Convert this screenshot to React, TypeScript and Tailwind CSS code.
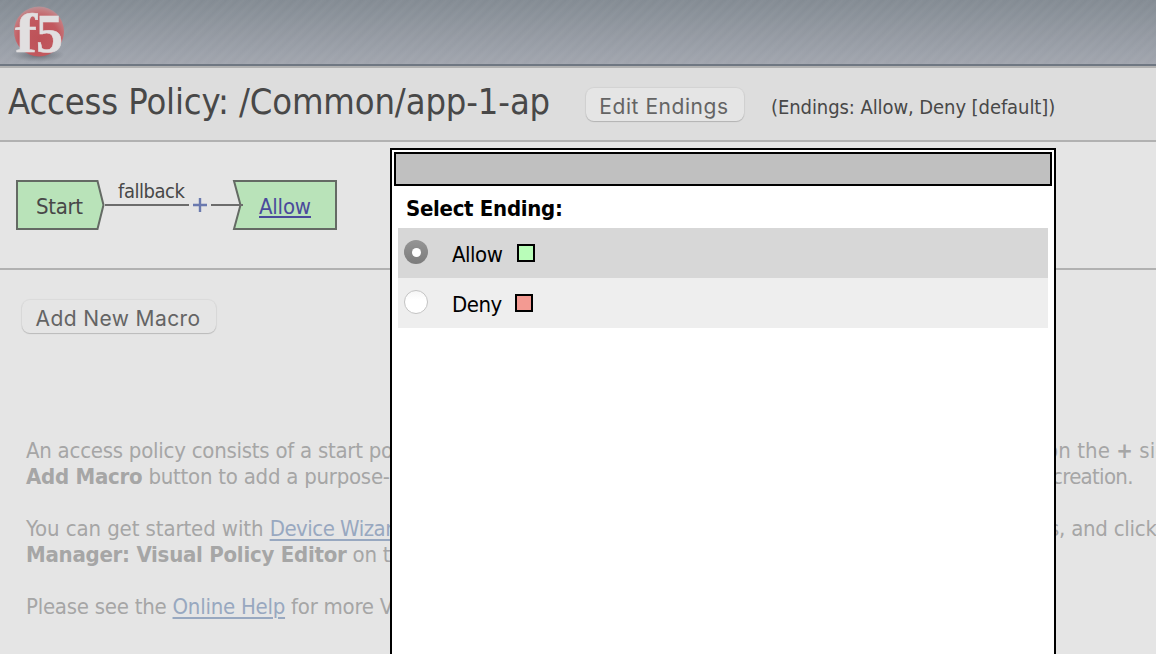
import React from "react";

const tahoma = "font-['DejaVu_Sans_Condensed','DejaVu_Sans',sans-serif] [font-stretch:condensed]";

function Logo() {
  return (
    <svg width="60" height="60" viewBox="0 0 60 60">
      <defs>
        <radialGradient id="ball" cx="0.5" cy="0.64" r="0.66">
          <stop offset="0" stopColor="#bd5258" />
          <stop offset="0.6" stopColor="#c2595f" />
          <stop offset="0.85" stopColor="#c67c80" />
          <stop offset="1" stopColor="#b3999f" />
        </radialGradient>
        <radialGradient id="shade">
          <stop offset="0" stopColor="#555b63" stopOpacity="0.8" />
          <stop offset="1" stopColor="#6b7078" stopOpacity="0" />
        </radialGradient>
      </defs>
      <ellipse cx="31" cy="49" rx="27" ry="7" fill="url(#shade)" />
      <circle cx="32" cy="25.500" r="25" fill="url(#ball)" />
      <g fontFamily="Liberation Serif, serif" fontWeight="700" fontSize="54" fill="#e1dfe0" stroke="#e1dfe0" strokeWidth="0.500">
        <text x="8" y="45.500" textLength="22" lengthAdjust="spacingAndGlyphs">f</text>
        <text x="29" y="45.500" textLength="27" lengthAdjust="spacingAndGlyphs">5</text>
      </g>
    </svg>
  );
}

function MacButton({ children, className }: { children: React.ReactNode; className: string }) {
  return (
    <button className={`h-[33px] shrink-0 rounded-[8px] bg-[#e5e5e5] pt-[3px] pr-[2px] text-center font-['Inter',sans-serif] text-[21px] leading-[32px] whitespace-nowrap text-[#646464] shadow-[0_0_1px_1px_rgba(0,0,0,0.05),0_1px_1px_rgba(0,0,0,0.15)] ${className}`}>
      {children}
    </button>
  );
}

function PolicyFlow() {
  return (
    <svg width="340" height="60" viewBox="0 0 340 60" className={`block ${tahoma}`}>
      <path d="M17 6H97.500L103.500 30L97.500 54H17Z" fill="#b9e3b9" stroke="#646a64" strokeWidth="2" />
      <path d="M234 6H336V54H234L240.500 30Z" fill="#b9e3b9" stroke="#646a64" strokeWidth="2" />
      <path d="M105 30H189M211 30H243" stroke="#6c6c6c" strokeWidth="2" />
      <path d="M193 30H207M200 23V37" stroke="#6a79ae" strokeWidth="2.400" />
      <text x="36" y="39" fontSize="22" textLength="47" fill="#484848">Start</text>
      <text x="118" y="23" fontSize="20" textLength="67" fill="#484848">fallback</text>
      <text x="259" y="39" fontSize="22" textLength="52" fill="#4a4a9c">Allow</text>
      <path d="M259 42H311" stroke="#4a4a9c" strokeWidth="2" />
    </svg>
  );
}

function Option({ label, checked, swatch, row, gap }: { label: string; checked?: boolean; swatch: string; row: string; gap: string }) {
  return (
    <label className={`flex h-[50px] items-center pl-[6px] ${row}`}>
      <span className={`-mt-[2px] flex size-6 items-center justify-center rounded-full ${checked ? "bg-linear-to-b from-[#959595] to-[#7c7c7c]" : "border border-[#c4c4c4] bg-linear-to-b from-[#f6f6f6] to-white to-40%"}`}>
        {checked && <span className="size-[9px] rounded-full bg-white" />}
      </span>
      <span className="ml-6 pt-[4px] text-[22px] leading-[26px] tracking-[-0.5px]">{label}</span>
      <span className={`size-[18px] border-2 border-black ${swatch} ${gap}`} />
    </label>
  );
}

export default function App() {
  return (
    <div className={`relative h-[654px] w-[1156px] overflow-hidden bg-[#e5e5e5] text-[#484848] ${tahoma}`}>
      <header className="h-[68px] border-b-2 border-[#b1b1b1] bg-[repeating-linear-gradient(135deg,rgba(255,255,255,0)_0px,rgba(255,255,255,0.035)_4px,rgba(255,255,255,0)_8px),linear-gradient(to_bottom,#838b93,#a2a6af)]">
        <div className="flex h-[66px] border-b-2 border-[#6f7782] pt-[6px] pl-[7px]">
          <Logo />
        </div>
      </header>
      <div className="flex h-[74px] items-start border-b-2 border-[#b1b1b1] bg-[#dddddd] pl-[8px]">
        <h1 className="w-[578px] shrink-0 pt-[12px] text-[36px] leading-[44px] tracking-[-0.12px] whitespace-nowrap">Access Policy: /Common/app-1-ap</h1>
        <MacButton className="mt-[20px] w-[158px] tracking-[0.55px]">Edit Endings</MacButton>
        <span className="mt-[26px] ml-[27px] text-[20px] leading-[26px] tracking-[-0.08px] whitespace-nowrap">(Endings: Allow, Deny [default])</span>
      </div>
      <section className="h-[128px] border-b-2 border-[#b1b1b1] pt-[33px]">
        <PolicyFlow />
      </section>
      <div className="pt-[30px] pl-[22px]">
        <MacButton className="w-[194px] tracking-[0.4px]">Add New Macro</MacButton>
      </div>
      <div className="mt-[105px] pl-[26px] text-[22px] leading-[26px] tracking-[-0.25px] whitespace-nowrap text-[#a6a6a6]">
        <p className="flex"><span className="w-[1020px] shrink-0">An access policy consists of a start point</span><span className="tracking-[0.08px]">on the <b>+</b> sign</span></p>
        <p className="flex"><span className="w-[1026px] shrink-0"><b>Add Macro</b> button to add a purpose-</span><span className="tracking-[-0.7px]">creation.</span></p>
        <p className="mt-[26px] flex"><span className="w-[1023px] shrink-0 tracking-[-0.1px]">You can get started with <a className="tracking-[-0.5px] text-[#98a8c0] underline decoration-2 underline-offset-[3px]">Device Wizards</a></span><span>s, and click</span></p>
        <p><b>Manager: Visual Policy Editor</b> on the</p>
        <p className="mt-[26px]">Please see the <a className="text-[#98a8c0] underline decoration-2 underline-offset-[3px]">Online Help</a> for more Vi</p>
      </div>
      <div role="dialog" className="absolute top-[148px] left-[390px] h-[520px] w-[666px] border-2 border-black bg-white p-[2px] text-black">
        <div className="h-[34px] border-2 border-black bg-[#c0c0c0]" />
        <h2 className="h-[42px] pt-[10px] pl-[12px] text-[22px] leading-[26px] font-bold tracking-[-0.3px]">Select Ending:</h2>
        <div className="mx-[4px]">
          <Option label="Allow" checked swatch="bg-[#b9fdb9]" row="bg-[#d7d7d7]" gap="ml-[15px]" />
          <Option label="Deny" swatch="bg-[#f39a92]" row="bg-[#eeeeee]" gap="ml-[13px]" />
        </div>
      </div>
    </div>
  );
}
